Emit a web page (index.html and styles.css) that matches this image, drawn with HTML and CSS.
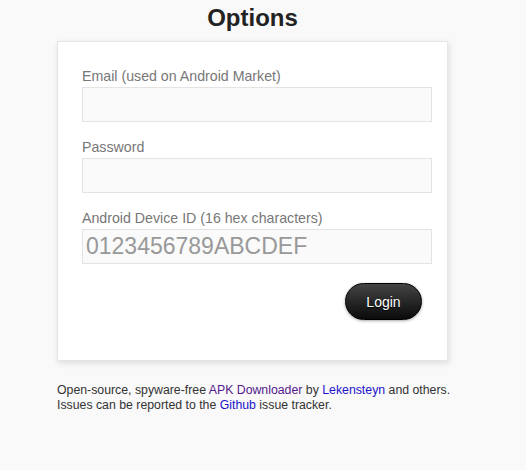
FILE: index.html
```html
<!DOCTYPE html>
<html>
<head>
  <title>Options</title>
  <link rel="stylesheet" href="styles.css">
</head>
<body>

  <div class="page">
    <h1>Options</h1>

    <form class="panel">
      <div class="field">
        <label for="email">Email (used on Android Market)</label>
        <input id="email" type="text">
      </div>
      <div class="field">
        <label for="password">Password</label>
        <input id="password" type="password">
      </div>
      <div class="field">
        <label for="androidid">Android Device ID (16 hex characters)</label>
        <input id="androidid" class="hex" type="text" placeholder="0123456789ABCDEF">
      </div>
      <div class="actions">
        <button type="button" class="login">Login</button>
      </div>
    </form>

    <p class="footer">
      Open-source, spyware-free <a class="visited" href="#">APK Downloader</a> by <a href="#">Lekensteyn</a> and others.<br>
      Issues can be reported to the <a href="#">Github</a> issue tracker.
    </p>
  </div>

</body>
</html>
```

FILE: styles.css
```css
body {
  font-family: "Liberation Sans", Arial, sans-serif;
  margin: 0;
  background-color: #f9f9f9;
  color: #333;
}

.page {
  width: 391px;
  margin-left: 57px;
}

h1 {
  font-size: 24px;
  line-height: 28px;
  margin: 4px 0 9px 0;
  text-align: center;
  color: #222;
}

.panel {
  background-color: #fff;
  border: 1px solid #e6e6e6;
  box-shadow: 1px 2px 6px rgba(0, 0, 0, 0.12);
  padding: 25px 24px 40px 24px;
}

.field {
  margin-bottom: 16px;
}

.field label {
  display: block;
  font-size: 14.2px;
  line-height: 18px;
  color: #777;
  margin-bottom: 2px;
}

.field input {
  display: block;
  box-sizing: border-box;
  width: 350px;
  height: 35px;
  margin: 0;
  padding: 0 3px;
  border: 1px solid #e3e3e3;
  background-color: #fafafa;
  font-family: "Liberation Sans", Arial, sans-serif;
  outline: none;
}

.field input.hex {
  font-size: 23px;
}

.field input.hex::placeholder {
  color: #999;
  opacity: 1;
}

.actions {
  width: 350px;
  display: flex;
  justify-content: flex-end;
  padding-top: 3px;
}

.login {
  width: 77px;
  height: 37px;
  margin-right: 10px;
  border: 1px solid #000;
  border-radius: 19px;
  background: linear-gradient(#444, #0a0a0a);
  box-shadow: 0 1px 3px rgba(0, 0, 0, 0.35);
  color: #fff;
  font-family: "Liberation Sans", Arial, sans-serif;
  font-size: 14px;
  text-shadow: 0 1px 1px #000;
}

.footer {
  font-size: 12.3px;
  line-height: 15px;
  margin: 22px 0 0 0;
  color: #333;
  white-space: nowrap;
}

.footer a {
  color: #2211cc;
  text-decoration: none;
}

.footer a.visited {
  color: #551a8b;
}
```
